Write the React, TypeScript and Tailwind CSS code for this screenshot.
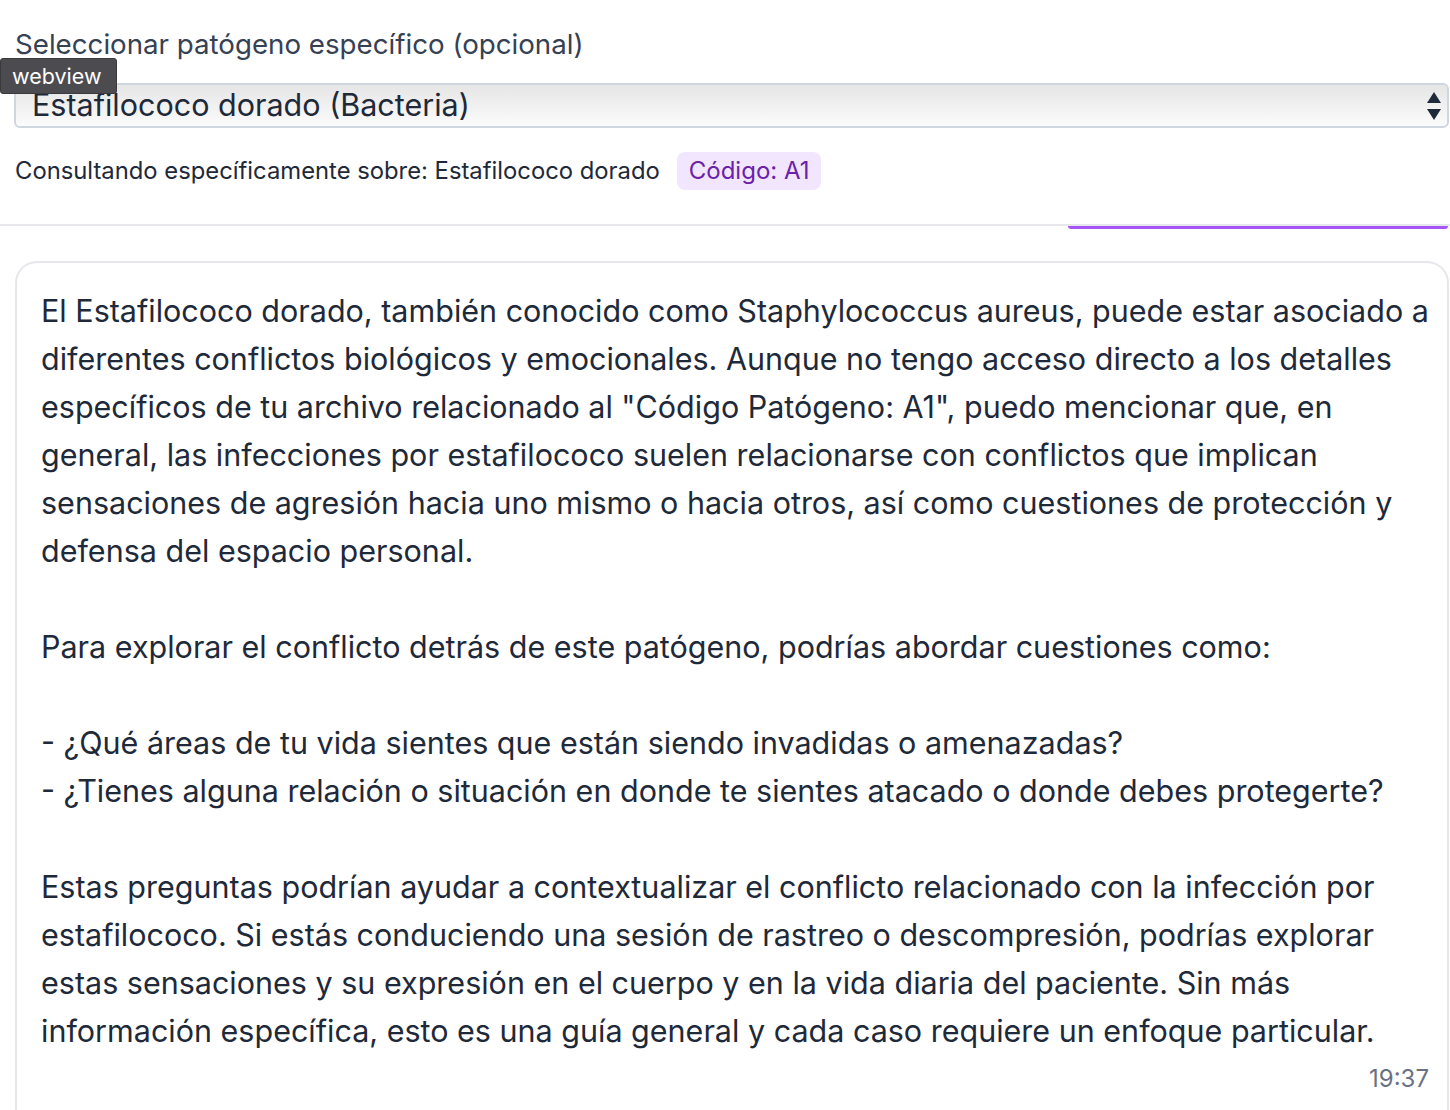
export default function App() {
  return (
    <div className="relative h-[1110px] w-[1450px] overflow-hidden bg-white font-['Inter',sans-serif] text-gray-800">
      {/* tooltip de la webview */}
      <div className="absolute left-0 top-[58px] z-10 rounded-[3px] border border-[#3a3a3c] bg-[#4b4b50] pl-[11px] pr-[14px] py-[3px] text-[21.5px] leading-[28px] text-white">
        webview
      </div>

      {/* selector de patógeno */}
      <div className="pl-[15px] pr-[1px] pt-[27px]">
        <label className="block text-[27.7px] leading-[34px] text-gray-700">
          Seleccionar patógeno específico (opcional)
        </label>
        <div className="-ml-[1px] mt-[22px] flex h-[45px] items-center justify-between rounded-[6px] border-2 border-[#cfd6e0] bg-gradient-to-b from-[#e6e6e6] to-[#fbfbfb] pl-[16px] pr-[5px]">
          <span className="text-[30.5px] leading-none text-gray-800">Estafilococo dorado (Bacteria)</span>
          <svg width="16" height="32" viewBox="0 0 16 32" className="text-gray-800">
            <path d="M8 2 L15 13 L1 13 Z" fill="currentColor" />
            <path d="M1 19 L15 19 L8 30 Z" fill="currentColor" />
          </svg>
        </div>
        <div className="mt-[24px] flex items-center gap-[17px]">
          <span className="text-[23.8px] leading-[30px] text-gray-800">
            Consultando específicamente sobre: Estafilococo dorado
          </span>
          <span className="rounded-[8px] bg-[#f1e6fd] px-[12px] py-[4px] text-[24px] leading-[30px] text-[#6b21a8]">
            Código: A1
          </span>
        </div>
      </div>

      {/* pestañas */}
      <div className="relative mt-[34px] h-[4px] border-t-2 border-gray-200">
        <div className="absolute right-[2px] top-0 h-[3px] w-[380px] rounded-b-full bg-[#a855f7]" />
      </div>

      {/* mensaje */}
      <div className="ml-[15px] mr-[1px] mt-[33px] rounded-tl-[22px] rounded-tr-[22px] border-2 border-b-0 border-gray-200 pl-[24px] pr-[16px] pt-[24px]">
        <div className="whitespace-pre-line text-[30.5px] leading-[48px] text-gray-800">
          {`El Estafilococo dorado, también conocido como Staphylococcus aureus, puede estar asociado a diferentes conflictos biológicos y emocionales. Aunque no tengo acceso directo a los detalles específicos de tu archivo relacionado al "Código Patógeno: A1", puedo mencionar que, en general, las infecciones por estafilococo suelen relacionarse con conflictos que implican sensaciones de agresión hacia uno mismo o hacia otros, así como cuestiones de protección y defensa del espacio personal.

Para explorar el conflicto detrás de este patógeno, podrías abordar cuestiones como:

- ¿Qué áreas de tu vida sientes que están siendo invadidas o amenazadas?
- ¿Tienes alguna relación o situación en donde te sientes atacado o donde debes protegerte?

Estas preguntas podrían ayudar a contextualizar el conflicto relacionado con la infección por estafilococo. Si estás conduciendo una sesión de rastreo o descompresión, podrías explorar estas sensaciones y su expresión en el cuerpo y en la vida diaria del paciente. Sin más información específica, esto es una guía general y cada caso requiere un enfoque particular.`}
        </div>
        <div className="mt-[9px] pb-[40px] pr-[2px] text-right text-[24px] leading-[30px] text-gray-500">19:37</div>
      </div>
    </div>
  );
}
